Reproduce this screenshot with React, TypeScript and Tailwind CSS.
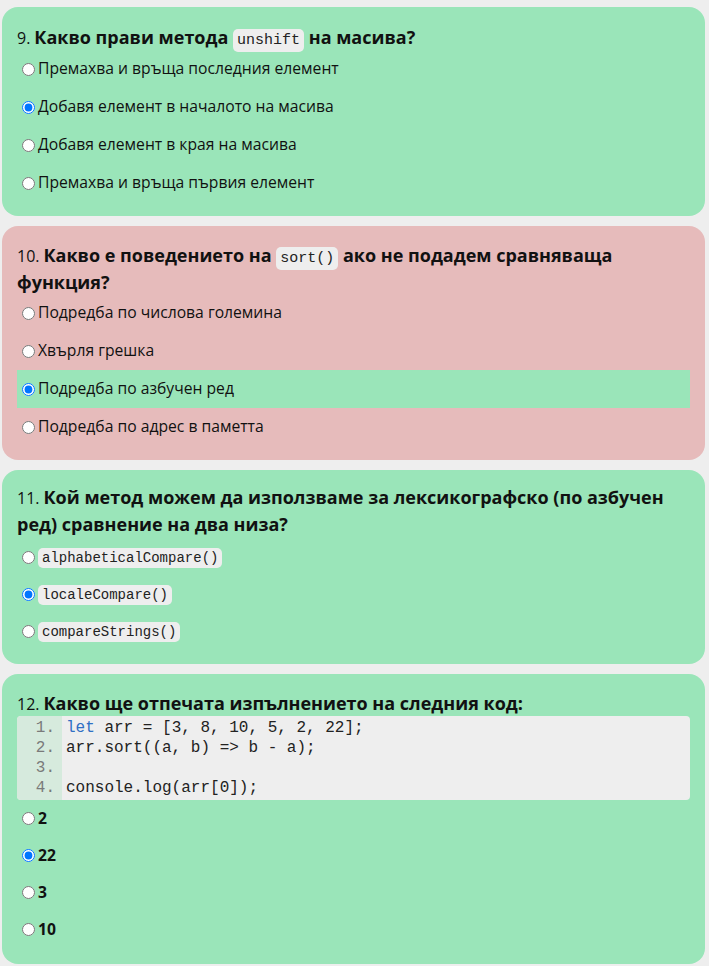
import React from 'react';

type Option = { text: string; code?: boolean; correct?: boolean };
type Question = {
  num: string;
  title: React.ReactNode;
  options: Option[];
  selected: number;
  wrong?: boolean;
  codeBlock?: boolean;
  boldOptions?: boolean;
  pad: string;
  listGap: string;
  row: string;
};

const Inline = ({ children, small }: { children: React.ReactNode; small?: boolean }) => (
  <code
    className={`rounded-[5px] bg-[#eeeeee] px-[4px] py-[3px] leading-none font-normal text-[#222] ${
      small ? 'text-[14px]' : 'text-[15px]'
    }`}
    style={{ fontFamily: '"Liberation Mono", "DejaVu Sans Mono", monospace' }}
  >
    {children}
  </code>
);

const questions: Question[] = [
  {
    num: '9.',
    title: (
      <>
        Какво прави метода <Inline>unshift</Inline> на масива?
      </>
    ),
    options: [
      { text: 'Премахва и връща последния елемент' },
      { text: 'Добавя елемент в началото на масива' },
      { text: 'Добавя елемент в края на масива' },
      { text: 'Премахва и връща първия елемент' },
    ],
    selected: 1,
    pad: 'pt-[17px] pb-[14px]',
    listGap: 'mt-[-1px]',
    row: 'h-[38px]',
  },
  {
    num: '10.',
    title: (
      <>
        Какво е поведението на <Inline>sort()</Inline> ако не подадем сравняваща функция?
      </>
    ),
    options: [
      { text: 'Подредба по числова големина' },
      { text: 'Хвърля грешка' },
      { text: 'Подредба по азбучен ред', correct: true },
      { text: 'Подредба по адрес в паметта' },
    ],
    selected: 2,
    wrong: true,
    pad: 'pt-[16px] pb-[14px]',
    listGap: 'mt-[-1px]',
    row: 'h-[38px]',
  },
  {
    num: '11.',
    title: <>Кой метод можем да използваме за лексикографско (по азбучен ред) сравнение на два низа?</>,
    options: [
      { text: 'alphabeticalCompare()', code: true },
      { text: 'localeCompare()', code: true },
      { text: 'compareStrings()', code: true },
    ],
    selected: 1,
    pad: 'pt-[14px] pb-[14px]',
    listGap: 'mt-[2px]',
    row: 'h-[37px]',
  },
  {
    num: '12.',
    title: <>Какво ще отпечата изпълнението на следния код:</>,
    options: [{ text: '2' }, { text: '22' }, { text: '3' }, { text: '10' }],
    selected: 1,
    codeBlock: true,
    boldOptions: true,
    pad: 'pt-[16px] pb-[16px]',
    listGap: '',
    row: 'h-[37px]',
  },
];

const codeLines: React.ReactNode[] = [
  <>
    <span className="text-[#2f6fc4]">let</span> arr = [3, 8, 10, 5, 2, 22];
  </>,
  <>arr.sort((a, b) =&gt; b - a);</>,
  <>&nbsp;</>,
  <>console.log(arr[0]);</>,
];

function CodeBlock() {
  return (
    <div
      className="mt-[-1px] flex overflow-hidden rounded-[4px] bg-[#eeeeee] text-[16px] leading-[20px]"
      style={{ fontFamily: '"Liberation Mono", "DejaVu Sans Mono", monospace' }}
    >
      <div className="w-[45px] shrink-0 bg-[#d6eadd] py-[2px] pr-[7px] text-right text-[#7a7a7a]">
        {codeLines.map((_, i) => (
          <div key={i}>{i + 1}.</div>
        ))}
      </div>
      <div className="py-[2px] pl-[4px] text-[#222]">
        {codeLines.map((l, i) => (
          <div key={i} className="whitespace-pre">
            {l}
          </div>
        ))}
      </div>
    </div>
  );
}

function QuestionCard({ q }: { q: Question }) {
  return (
    <div className={`rounded-[16px] px-[15px] ${q.pad} ${q.wrong ? 'bg-[#e6bbbb]' : 'bg-[#9ae5b9]'}`}>
      <h3 className="text-[18px] leading-[26px] font-bold text-[#111]">
        <span className="mr-[4px] text-[16px] font-normal">{q.num}</span>
        {q.title}
      </h3>
      {q.codeBlock && <CodeBlock />}
      <div className={q.listGap}>
        {q.options.map((o, i) => (
          <label
            key={i}
            className={`flex ${q.row} items-center ${q.wrong && o.correct ? 'bg-[#9ae5b9]' : ''}`}
          >
            <input
              type="radio"
              name={`q${q.num}`}
              defaultChecked={i === q.selected}
              className="mr-[3px] ml-[5px] h-[13px] w-[13px]"
            />
            {o.code ? (
              <Inline small>{o.text}</Inline>
            ) : (
              <span className={`text-[15.7px] text-[#111] ${q.boldOptions ? 'font-bold' : ''}`}>
                {o.text}
              </span>
            )}
          </label>
        ))}
      </div>
    </div>
  );
}

export default function App() {
  return (
    <div
      className="min-h-[966px] bg-[#eeeeee] pt-[7px] pr-[4px] pb-[4px] pl-[2px]"
      style={{ fontFamily: '"Open Sans", "Noto Sans", sans-serif' }}
    >
      <div className="flex flex-col gap-[10px]">
        {questions.map((q) => (
          <QuestionCard key={q.num} q={q} />
        ))}
      </div>
    </div>
  );
}
